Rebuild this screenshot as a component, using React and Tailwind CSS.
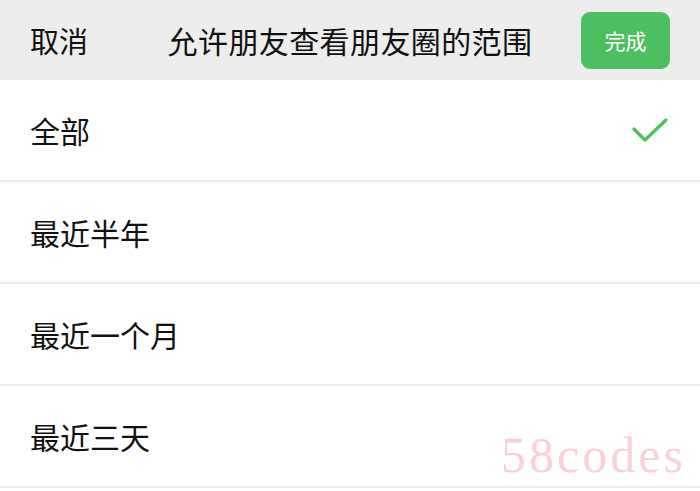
export default function App() {
  const options = ["全部", "最近半年", "最近一个月", "最近三天"]
  const selected = 0

  return (
    <div
      className="relative w-[700px] h-[491px] overflow-hidden bg-white text-[#111]"
      style={{ fontFamily: '"Noto Sans CJK SC", "Noto Sans", sans-serif' }}
    >
      {/* header */}
      <div className="grid grid-cols-[1fr_auto_1fr] items-center h-[80px] bg-[#ededed] px-[30px]">
        <span className="text-[29px] leading-none">取消</span>
        <span className="text-[30px] leading-none tracking-[0.4px]">
          允许朋友查看朋友圈的范围
        </span>
        <div className="flex justify-end">
          <button className="w-[89px] h-[57px] rounded-[9px] bg-[#4cbf60] text-white text-[21px] leading-none">
            完成
          </button>
        </div>
      </div>

      {/* options */}
      <div className="flex flex-col">
        {options.map((label, i) => (
          <div
            key={label}
            className="flex items-center justify-between h-[102px] pl-[30px] pr-[32px] border-b-2 border-[#ebebeb]"
          >
            <span className="text-[30px] leading-none">{label}</span>
            {i === selected && (
              <svg width="36" height="26" viewBox="0 0 36 26">
                <polyline
                  points="2,12 13,23 34,3"
                  fill="none"
                  stroke="#4cbf60"
                  strokeWidth="3.2"
                  strokeLinecap="round"
                  strokeLinejoin="round"
                />
              </svg>
            )}
          </div>
        ))}
      </div>

      {/* watermark */}
      <div
        className="absolute left-[501px] top-[430px] text-[50px] leading-none tracking-[3px] text-[#f9d2d7]"
        style={{ fontFamily: '"Liberation Serif", serif' }}
      >
        58codes
      </div>
    </div>
  )
}
